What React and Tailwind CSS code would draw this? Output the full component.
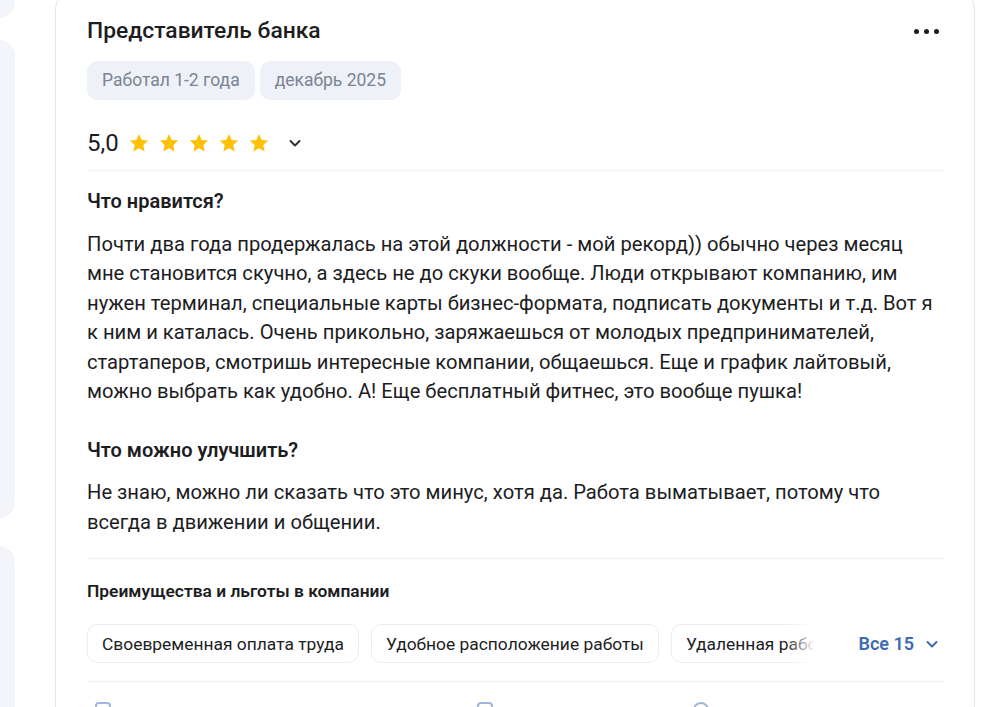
import React from 'react'

const font = { fontFamily: 'Roboto, "Noto Sans", sans-serif' }

function Star() {
  return (
    <svg width="22" height="22" viewBox="0 0 24 24" className="shrink-0">
      <path
        d="M12 2.2l2.9 6.5 7.1.7-5.3 4.8 1.5 7-6.2-3.6-6.2 3.6 1.5-7L2 9.4l7.1-.7L12 2.2z"
        fill="#ffc107"
      />
    </svg>
  )
}

function Chevron({ className = '', color = '#333', size = 16 }) {
  return (
    <svg width={size} height={size} viewBox="0 0 16 16" className={className}>
      <path d="M3.5 6l4.5 4.5L12.5 6" fill="none" stroke={color} strokeWidth="2" strokeLinecap="round" strokeLinejoin="round" />
    </svg>
  )
}

const perks = ['Своевременная оплата труда', 'Удобное расположение работы', 'Удаленная работа']

export default function App() {
  return (
    <div className="h-[707px] overflow-hidden bg-white flex gap-[40px]" style={font}>
      {/* left column, mostly off-screen */}
      <div className="w-[15px] shrink-0 overflow-hidden flex flex-col">
        <div className="shrink-0 w-[60px] ml-[-45px] h-[18px] bg-[#f4f5fa] rounded-br-[16px]" />
        <div className="shrink-0 w-[60px] ml-[-45px] h-[478px] mt-[22px] bg-[#f4f5fa] rounded-r-[16px]" />
        <div className="shrink-0 w-[60px] ml-[-45px] h-[200px] mt-[28px] bg-[#f4f5fa] rounded-tr-[16px]" />
      </div>

      {/* review card */}
      <div className="w-[920px] shrink-0 mt-[-12px] h-[740px] border border-[#dfe4ee] rounded-[22px] pl-[31px] pr-[30px] pt-[28px] text-[#1d1d1f]">
        <div className="flex items-center justify-between h-[28px]">
          <h2 className="text-[22.8px] font-medium leading-[28px]">Представитель банка</h2>
          <div className="flex gap-[5px] mr-[5px]">
            <span className="w-[5px] h-[5px] rounded-full bg-[#1d1d1f]" />
            <span className="w-[5px] h-[5px] rounded-full bg-[#1d1d1f]" />
            <span className="w-[5px] h-[5px] rounded-full bg-[#1d1d1f]" />
          </div>
        </div>

        <div className="flex gap-[5px] mt-[16px]">
          <span className="h-[39px] px-[15px] flex items-center rounded-[10px] bg-[#eef1f7] text-[#7a8494] text-[17.5px]">Работал 1-2 года</span>
          <span className="h-[39px] px-[15px] flex items-center rounded-[10px] bg-[#eef1f7] text-[#7a8494] text-[17.5px]">декабрь 2025</span>
        </div>

        <div className="flex items-center h-[30px] mt-[28px]">
          <span className="text-[24px] leading-[30px] mr-[9px]">5,0</span>
          <div className="flex gap-[8px]">
            <Star /><Star /><Star /><Star /><Star />
          </div>
          <Chevron className="ml-[17px]" />
        </div>

        <div className="h-px bg-[#eef0f3] mt-[12px]" />

        <h3 className="text-[20px] font-semibold leading-[24px] mt-[18px]">Что нравится?</h3>
        <p className="text-[20.2px] leading-[29.4px] mt-[17px]">
          Почти два года продержалась на этой должности - мой рекорд)) обычно через месяц мне становится скучно, а здесь не до скуки вообще. Люди открывают компанию, им нужен терминал, специальные карты бизнес-формата, подписать документы и т.д. Вот я к ним и каталась. Очень прикольно, заряжаешься от молодых предпринимателей, стартаперов, смотришь интересные компании, общаешься. Еще и график лайтовый, можно выбрать как удобно. А! Еще бесплатный фитнес, это вообще пушка!
        </p>

        <h3 className="text-[20px] font-semibold leading-[24px] mt-[32px]">Что можно улучшить?</h3>
        <p className="text-[20.2px] leading-[29.4px] mt-[16px]">
          Не знаю, можно ли сказать что это минус, хотя да. Работа выматывает, потому что всегда в движении и общении.
        </p>

        <div className="h-px bg-[#eef0f3] mt-[21px]" />

        <h4 className="text-[17.4px] font-semibold leading-[20px] mt-[22px]">Преимущества и льготы в компании</h4>

        <div className="flex items-center mt-[23px]">
          <div className="relative w-[728px] overflow-hidden">
            <div className="flex gap-[12px]">
              {perks.map((p) => (
                <span key={p} className="shrink-0 h-[39px] px-[14px] flex items-center rounded-[10px] border border-[#e9ecf3] text-[17.4px] whitespace-nowrap">
                  {p}
                </span>
              ))}
            </div>
            <div className="absolute right-0 top-0 h-full w-[30px] bg-gradient-to-r from-white/0 to-white" />
          </div>
          <button className="ml-auto flex items-center gap-[10px] text-[18px] font-semibold text-[#3e6ab3]">
            Все 15
            <Chevron color="#3e6ab3" className="mr-[4px]" />
          </button>
        </div>

        <div className="h-px bg-[#eef0f3] mt-[18px]" />

        <div className="flex items-start mt-[20px] text-[#8aa6d6]">
          <span className="ml-[8px] w-[16px] h-[16px] rounded-[4px] border-2 border-[#9fb5db]" />
          <span className="ml-[366px] w-[16px] h-[16px] rounded-[4px] border-2 border-[#9fb5db]" />
          <span className="ml-[200px] w-[16px] h-[16px] rounded-full border-2 border-[#9fb5db]" />
        </div>
      </div>
    </div>
  )
}
